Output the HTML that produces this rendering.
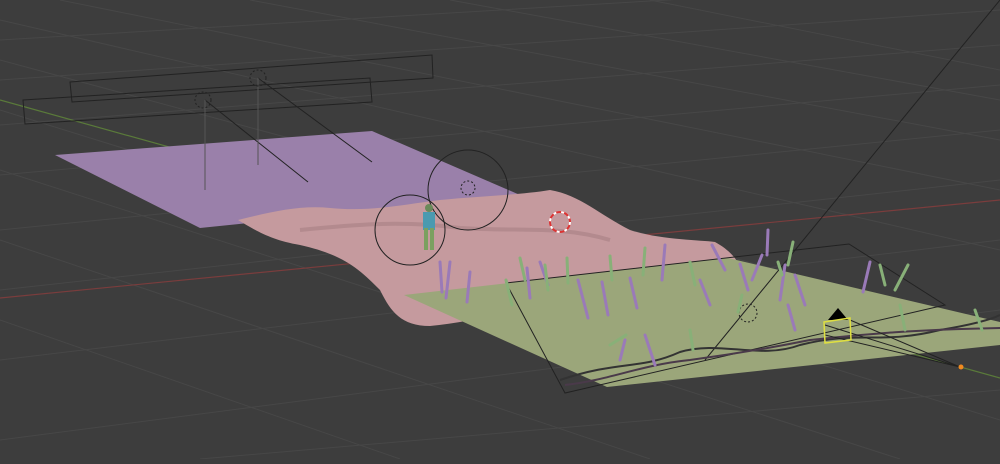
<!DOCTYPE html>
<html><head><style>html,body{margin:0;padding:0;background:#3d3d3d;overflow:hidden}</style></head>
<body>
<svg width="1000" height="459" viewBox="0 0 1000 459" xmlns="http://www.w3.org/2000/svg">
<rect width="1000" height="459" fill="#3d3d3d"/>
<g stroke="#474747" stroke-width="1">
<path d="M0 40 L1000 -20 M0 80 L1000 10 M0 125 L1000 45 M0 175 L1000 85 M0 230 L1000 130 M0 290 L1000 180 M0 360 L1000 240 M0 440 L1000 310 M200 459 L1000 390"/>
<path d="M0 60 L1000 330 M0 20 L1000 250 M60 0 L1000 190 M250 0 L1000 140 M450 0 L1000 100 M650 0 L1000 70 M0 110 L1000 420 M0 170 L900 459 M0 240 L650 459 M0 320 L400 459"/>
</g>
<line x1="0" y1="298" x2="1000" y2="200" stroke="#7a3d3d" stroke-width="1.2"/>
<line x1="0" y1="100" x2="1000" y2="378" stroke="#5a7a3a" stroke-width="1.2"/>
<polygon points="55,155 372,131 520,195 200,228" fill="#9a80aa"/>
<path d="M238,220 C270,212 300,205 330,208 C370,212 400,205 440,200 C480,196 520,195 550,190 C580,195 600,215 630,230 C660,240 700,240 715,242 C730,250 740,262 740,270 L560,300 C520,310 470,322 430,326 C400,326 390,310 380,290 C360,270 345,255 300,245 C270,240 255,230 238,220 Z" fill="#c59a9e"/>
<path d="M300,230 C350,225 400,220 460,228 C520,232 560,225 610,240" stroke="#b38a8e" fill="none" stroke-width="4"/>
<polygon points="404,295 728,258 1000,322 1000,345 607,387" fill="#9ba67a"/>
<g fill="none" stroke="#222" stroke-width="1">
<polygon points="70,82 432,55 433,78 72,102"/>
<polygon points="23,100 370,78 372,102 25,124"/>
<line x1="258" y1="78" x2="372" y2="162"/>
<line x1="205" y1="100" x2="308" y2="182"/>
<line x1="258" y1="78" x2="258" y2="165" stroke="#555"/>
<line x1="205" y1="100" x2="205" y2="190" stroke="#555"/>
<circle cx="258" cy="78" r="8" stroke-dasharray="2 2"/>
<circle cx="203" cy="100" r="8" stroke-dasharray="2 2"/>
<circle cx="468" cy="190" r="40"/>
<circle cx="410" cy="230" r="35"/>
<circle cx="468" cy="188" r="7" stroke-dasharray="2 2"/>
<line x1="1000" y1="0" x2="705" y2="360"/>
<polygon points="506,283 849,244 945,305 565,393"/>
<circle cx="748" cy="313" r="9" stroke-dasharray="2 2"/>
<path d="M560,380 C620,360 640,370 680,352 C720,340 760,360 800,345 C860,330 880,345 940,330 C970,325 990,320 1000,315" stroke="#333" stroke-width="2"/>
<path d="M565,385 C610,380 640,365 690,360 C720,356 760,350 810,340 C860,335 900,330 1000,328" stroke="#4a3a4a" stroke-width="2"/>
<line x1="825" y1="325" x2="960" y2="367"/>
<line x1="825" y1="335" x2="960" y2="367"/>
<line x1="850" y1="320" x2="960" y2="367"/>
</g>
<polygon points="838,308 828,320 848,320" fill="#000"/>
<polygon points="824,322 850,318 851,340 825,343" fill="none" stroke="#e0e040" stroke-width="1.5"/>
<circle cx="961" cy="367" r="2.5" fill="#f08a20"/>
<circle cx="560" cy="222" r="10" fill="none" stroke="#d33" stroke-width="2"/>
<circle cx="560" cy="222" r="10" fill="none" stroke="#fff" stroke-width="2" stroke-dasharray="3 5"/>
<g>
<rect x="423" y="212" width="12" height="18" fill="#4a9ab0"/>
<circle cx="429" cy="208" r="4" fill="#6a8a5a"/>
<rect x="424" y="228" width="4" height="22" fill="#7aa060"/>
<rect x="430" y="228" width="4" height="22" fill="#7aa060"/>
</g>
<g stroke-width="3" stroke-linecap="round">
<g stroke="#9a7ab8">
<line x1="440" y1="262" x2="442" y2="292"/><line x1="450" y1="262" x2="446" y2="298"/><line x1="470" y1="272" x2="467" y2="302"/>
<line x1="527" y1="268" x2="530" y2="298"/><line x1="540" y1="262" x2="548" y2="285"/><line x1="578" y1="280" x2="588" y2="318"/>
<line x1="602" y1="282" x2="608" y2="315"/><line x1="630" y1="278" x2="637" y2="308"/><line x1="665" y1="245" x2="662" y2="280"/>
<line x1="700" y1="280" x2="710" y2="305"/><line x1="712" y1="245" x2="725" y2="270"/><line x1="740" y1="264" x2="748" y2="290"/>
<line x1="768" y1="230" x2="767" y2="255"/><line x1="785" y1="265" x2="780" y2="300"/><line x1="795" y1="275" x2="805" y2="305"/>
<line x1="788" y1="305" x2="795" y2="330"/><line x1="870" y1="262" x2="863" y2="292"/><line x1="625" y1="340" x2="620" y2="360"/>
<line x1="645" y1="335" x2="655" y2="365"/><line x1="762" y1="255" x2="752" y2="280"/>
</g>
<g stroke="#88b078">
<line x1="506" y1="280" x2="512" y2="305"/><line x1="520" y1="258" x2="525" y2="280"/><line x1="545" y1="265" x2="548" y2="290"/>
<line x1="567" y1="258" x2="568" y2="283"/><line x1="610" y1="256" x2="612" y2="280"/><line x1="645" y1="248" x2="643" y2="275"/>
<line x1="690" y1="262" x2="695" y2="285"/><line x1="742" y1="295" x2="738" y2="312"/><line x1="793" y1="242" x2="788" y2="265"/>
<line x1="880" y1="265" x2="885" y2="285"/><line x1="908" y1="265" x2="895" y2="290"/><line x1="900" y1="305" x2="905" y2="330"/>
<line x1="610" y1="345" x2="626" y2="335"/><line x1="690" y1="330" x2="693" y2="350"/><line x1="975" y1="310" x2="982" y2="330"/>
<line x1="778" y1="262" x2="782" y2="275"/>
</g>
</g>
</svg>
</body></html>
